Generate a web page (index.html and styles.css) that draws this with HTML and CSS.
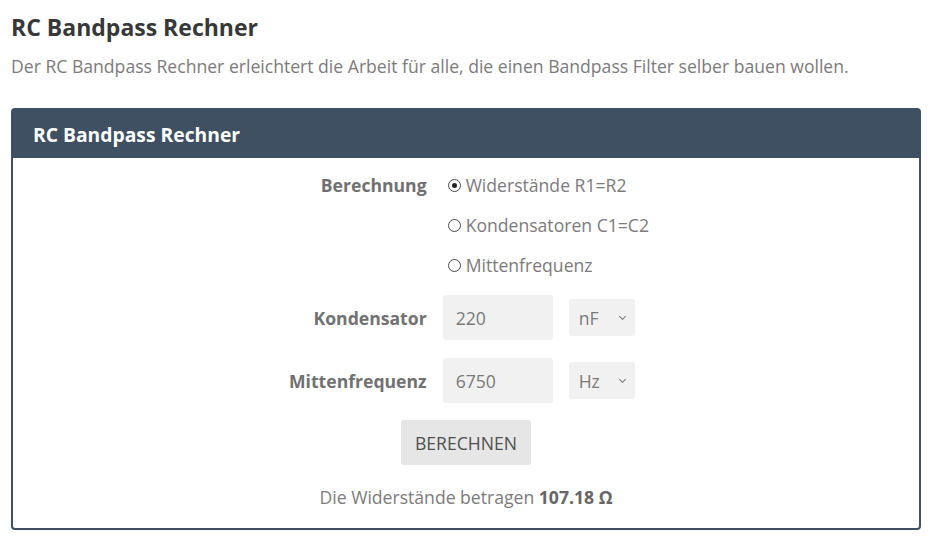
FILE: index.html
```html
<!DOCTYPE html>
<html lang="de">
<head>
    <meta charset="UTF-8">
    <meta name="viewport" content="width=device-width, initial-scale=1.0">
    <title>RC Bandpass Rechner</title>
    <link rel="stylesheet" href="styles.css">
</head>
<body>
    <h1>RC Bandpass Rechner</h1>
    <p class="intro">Der RC Bandpass Rechner erleichtert die Arbeit für alle, die einen Bandpass Filter selber bauen wollen.</p>

    <div class="card">
        <div class="card-header">RC Bandpass Rechner</div>
        <form class="card-body" id="calcForm">
            <div class="grid">
                <div class="label label-top">Berechnung</div>
                <div class="radios">
                    <label class="radio"><input type="radio" name="mode" value="r" checked> Widerstände R1=R2</label>
                    <label class="radio"><input type="radio" name="mode" value="c"> Kondensatoren C1=C2</label>
                    <label class="radio"><input type="radio" name="mode" value="f"> Mittenfrequenz</label>
                </div>

                <label class="label" for="cap">Kondensator</label>
                <div class="field">
                    <input type="text" id="cap" value="220">
                    <span class="select">
                        <select>
                            <option>pF</option>
                            <option selected>nF</option>
                            <option>µF</option>
                        </select>
                    </span>
                </div>

                <label class="label" for="freq">Mittenfrequenz</label>
                <div class="field">
                    <input type="text" id="freq" value="6750">
                    <span class="select">
                        <select>
                            <option selected>Hz</option>
                            <option>kHz</option>
                        </select>
                    </span>
                </div>
            </div>

            <button type="submit">BERECHNEN</button>
            <p class="result">Die Widerstände betragen <b>107.18 Ω</b></p>
        </form>
    </div>
</body>
</html>
```

FILE: styles.css
```css
body { font-family: "Open Sans", "Liberation Sans", sans-serif; margin: 0; padding: 12px 8px 0 11px; background: #fff; color: #7a7a7a; }
h1 { font-size: 23px; font-weight: 700; color: #383838; margin: 0; line-height: 30px; }
.intro { font-size: 17.6px; margin: 11px 0 0; line-height: 26px; color: #7d7a7c; }

.card { margin-top: 29px; border: 2px solid #3e5062; border-radius: 4px; }
.card-header { background-color: #3e5062; color: white; font-size: 19.3px; font-weight: 700; padding: 0 20px; height: 48px; line-height: 50px; }
.card-body { padding: 14px 20px 18px; display: flex; flex-direction: column; align-items: center; }

.grid { display: grid; grid-template-columns: auto auto; column-gap: 16px; row-gap: 18px; align-items: center; margin-left: 6px; }
.label { justify-self: end; font-weight: 700; color: #717171; font-size: 17.6px; }
.label-top { align-self: start; line-height: 26px; }

.radios { display: flex; flex-direction: column; gap: 14px; padding-left: 5px; margin-bottom: -1px; }
.radio { display: flex; align-items: center; gap: 5px; font-size: 17.6px; line-height: 26px; color: #7d7a7c; cursor: pointer; }
.radio input {
    appearance: none;
    -webkit-appearance: none;
    width: 13px;
    height: 13px;
    margin: 0;
    border: 1.5px solid #474747;
    border-radius: 50%;
    box-sizing: border-box;
    display: grid;
    place-content: center;
}
.radio input:checked::before { content: ""; width: 5px; height: 5px; border-radius: 50%; background: #222; }

.field { display: flex; align-items: center; gap: 16px; }
.field input {
    width: 110px;
    height: 45px;
    box-sizing: border-box;
    border: none;
    border-radius: 3px;
    background-color: #f1f1f1;
    padding: 0 13px;
    font-family: inherit;
    font-size: 17.6px;
    color: #7a7a7a;
}
.select { position: relative; display: block; }
.select select {
    appearance: none;
    -webkit-appearance: none;
    display: block;
    width: 66px;
    height: 37px;
    border: none;
    border-radius: 3px;
    background-color: #f1f1f1;
    padding: 0 10px;
    font-family: inherit;
    font-size: 17.6px;
    color: #7a7a7a;
}
.select::after {
    content: "";
    position: absolute;
    right: 10px;
    top: 15px;
    width: 4px;
    height: 4px;
    border-right: 1.5px solid #777;
    border-bottom: 1.5px solid #777;
    transform: rotate(45deg);
    pointer-events: none;
}

button {
    margin-top: 17px;
    background-color: #e6e6e6;
    color: #4f4f4f;
    border: none;
    border-radius: 3px;
    width: 130px;
    height: 45px;
    font-family: inherit;
    font-size: 17.6px;
    cursor: pointer;
}
button:hover { background-color: #dcdcdc; }

.result { margin: 19px 0 0; font-size: 17.6px; line-height: 26px; color: #7d7a7c; }
.result b { color: #666; }
```
